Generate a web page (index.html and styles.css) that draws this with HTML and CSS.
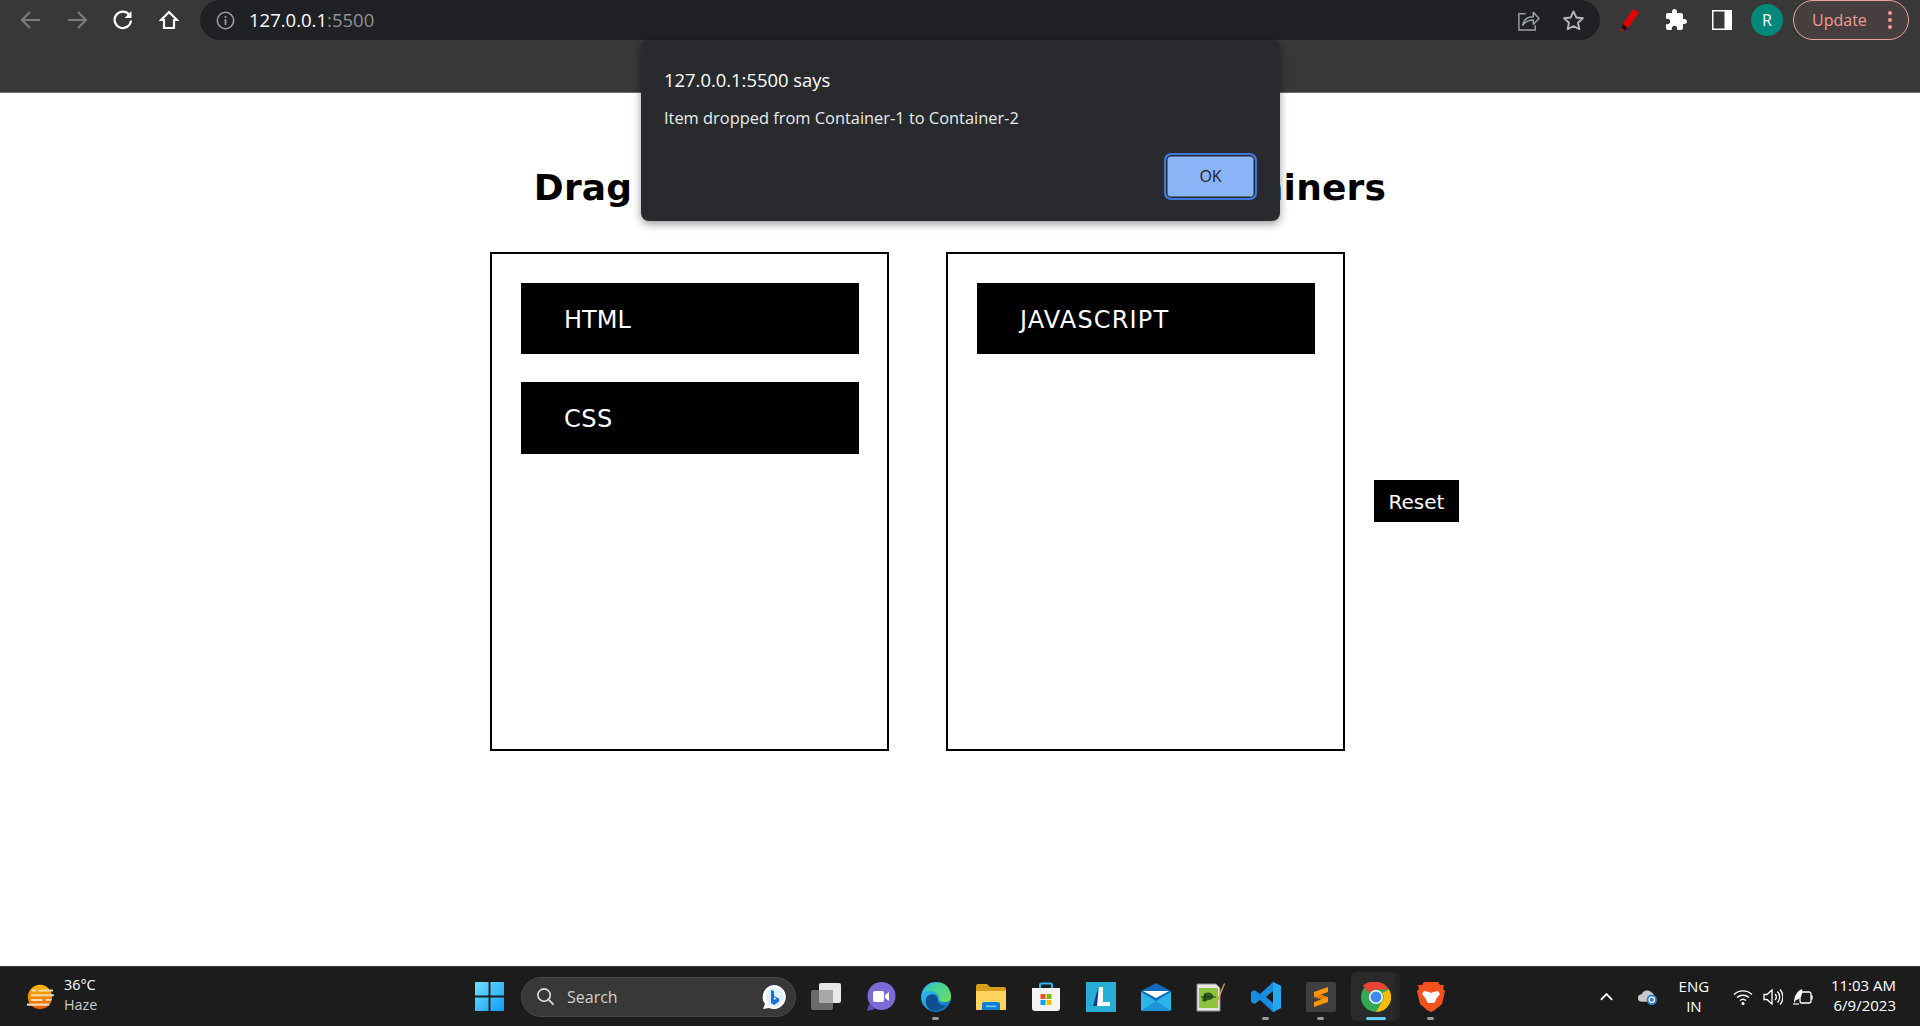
FILE: index.html
```html
<!DOCTYPE html>
<html lang="en">
<head>
    <meta charset="UTF-8">
    <title>Drag and Drop</title>
    <link rel="stylesheet" href="styles.css">
</head>
<body>
    <!-- browser toolbar -->
    <header class="browser">
        <div class="toolbar">
            <div class="nav-btns">
                <svg class="nav-icon" viewBox="0 0 20 20"><path class="stroke-off" d="M19 10H1M9 2l-8 8 8 8"/></svg>
                <svg class="nav-icon" viewBox="0 0 20 20"><path class="stroke-off" d="M1 10h18M11 2l8 8-8 8"/></svg>
                <svg class="nav-icon" viewBox="0 0 20 20"><path class="stroke-on" d="M16.5 5A8.2 8.2 0 1 0 18 10.5"/><path class="fill-on" d="M18.5 1v7h-7z"/></svg>
                <svg class="nav-icon" viewBox="0 0 20 20"><path class="stroke-on" d="M10 2l8 8h-3v8H5v-8H2z"/></svg>
            </div>
            <div class="omnibox">
                <svg class="info-icon" viewBox="0 0 20 20"><circle cx="10" cy="10" r="8.6" fill="none" stroke="#9aa0a6" stroke-width="1.6"/><rect x="9.1" y="8.6" width="1.8" height="6" fill="#9aa0a6"/><rect x="9.1" y="5.4" width="1.8" height="1.9" fill="#9aa0a6"/></svg>
                <span class="url">127.0.0.1<span class="url-port">:5500</span></span>
                <div class="omni-actions">
                    <svg class="omni-icon" viewBox="0 0 24 24"><path d="M9 5H2v17h17v-5" fill="none" stroke="#9aa0a6" stroke-width="1.5"/><path d="M6 17c1-6 5-9 11-9V3.500l6 6.500-6 6v-4.500c-5 0-8 1.500-11 5.500z" fill="none" stroke="#9aa0a6" stroke-width="1.5" stroke-linejoin="round"/></svg>
                    <svg class="omni-icon" viewBox="0 0 24 24"><path d="M12 2.500l2.900 6.300 6.900.8-5.100 4.700 1.400 6.800-6.100-3.400-6.100 3.400 1.400-6.800-5.100-4.700 6.900-.8z" fill="none" stroke="#b4b7ba" stroke-width="2" stroke-linejoin="round"/></svg>
                </div>
            </div>
            <div class="extensions">
                <svg class="ext-icon" viewBox="0 0 24 24"><path d="M15.300 1L21 4.700 9.700 20.300 4.700 16z" fill="#e60000"/><path d="M4.700 16l5 4.300-2.700 1.700-3.500-2z" fill="#111"/><path d="M3.500 20l2 1.500-1 1.500H2z" fill="#e60000"/></svg>
                <svg class="ext-icon" viewBox="0 0 24 24"><path fill="#fff" d="M20.500 11H19V7c0-1.100-.9-2-2-2h-4V3.500C13 2.120 11.880 1 10.500 1S8 2.120 8 3.500V5H4c-1.100 0-1.990.9-1.990 2v3.800H3.500c1.490 0 2.700 1.210 2.700 2.700s-1.210 2.700-2.700 2.700H2V20c0 1.100.9 2 2 2h3.800v-1.500c0-1.490 1.210-2.700 2.700-2.700 1.490 0 2.700 1.210 2.700 2.700V22H17c1.100 0 2-.9 2-2v-4h1.500c1.380 0 2.500-1.120 2.500-2.500S21.880 11 20.500 11z"/></svg>
                <svg class="ext-icon" viewBox="0 0 24 24"><rect x="2" y="2" width="20" height="20" fill="#fff"/><rect x="3.500" y="3.500" width="11" height="17" fill="#383838"/></svg>
            </div>
            <div class="avatar">R</div>
            <div class="update">
                <span>Update</span>
                <span class="dots"><i></i><i></i><i></i></span>
            </div>
        </div>
        <div class="toolbar-rest"></div>
    </header>

    <main class="page">
        <h1 class="title">Drag and Drop Items Between Containers</h1>
        <div class="board">
            <section class="container">
                <div class="item">HTML</div>
                <div class="item item-tall">CSS</div>
            </section>
            <section class="container">
                <div class="item item-wide">JAVASCRIPT</div>
            </section>
            <button class="reset">Reset</button>
        </div>
    </main>

    <!-- alert dialog -->
    <div class="dialog">
        <p class="dialog-title">127.0.0.1:5500 says</p>
        <p class="dialog-msg">Item dropped from Container-1 to Container-2</p>
        <div class="dialog-actions"><button class="dialog-ok">OK</button></div>
    </div>

    <footer class="taskbar">
        <div class="weather">
            <svg class="weather-icon" viewBox="0 0 32 32">
                <defs><linearGradient id="sun" x1="0" y1="0" x2="0" y2="1"><stop offset="0" stop-color="#ffb900"/><stop offset="1" stop-color="#e85d04"/></linearGradient></defs>
                <circle cx="16" cy="16" r="13" fill="url(#sun)"/>
                <g fill="#f2dcb0"><rect x="14" y="8" width="16" height="2.200" rx="1"/><rect x="7" y="8" width="5" height="2.200" rx="1"/><rect x="6" y="13" width="25" height="2.200" rx="1"/><rect x="6" y="18" width="13" height="2.200" rx="1"/><rect x="22" y="18" width="6" height="2.200" rx="1"/><rect x="2" y="23" width="24" height="2.200" rx="1"/></g>
            </svg>
            <div class="weather-text">
                <span class="temp">36°C</span>
                <span class="haze">Haze</span>
            </div>
        </div>

        <div class="tasks">
            <svg class="win-logo" viewBox="0 0 30 30">
                <defs><linearGradient id="win" x1="0" y1="0" x2="1" y2="1"><stop offset="0" stop-color="#6fe0ff"/><stop offset="1" stop-color="#0f9cf5"/></linearGradient></defs>
                <path fill="url(#win)" d="M0 1a1 1 0 0 1 1-1h13v14H0zM16 0h13a1 1 0 0 1 1 1v13H16zM0 16h14v14H1a1 1 0 0 1-1-1zM16 16h14v13a1 1 0 0 1-1 1H16z"/>
            </svg>
            <div class="search">
                <svg class="search-icon" viewBox="0 0 20 20"><circle cx="8.500" cy="8.500" r="6.500" fill="none" stroke="#ddd" stroke-width="1.700"/><path d="M13.500 13.500L18.500 18.500" stroke="#ddd" stroke-width="1.900"/></svg>
                <span class="search-text">Search</span>
                <svg class="bing-icon" viewBox="0 0 26 26"><path d="M13 1a12 12 0 1 1-5 23l-6 1 2-5A12 12 0 0 1 13 1z" fill="#fff"/><path d="M13 3.500a9.500 9.500 0 1 1-4 18l-3 .5 1-3A9.500 9.500 0 0 1 13 3.500z" fill="#dff1ff"/><path d="M10 6l3 1v5l5 2.500v3L13 21l-3-2z" fill="#1a6fe0"/><path d="M13 16l2.500-1.500L13 13z" fill="#dff1ff"/></svg>
            </div>

            <div class="task">
                <svg class="task-icon" viewBox="0 0 30 30"><rect x="8" y="1" width="22" height="20" rx="2" fill="#e8e8e8"/><rect x="0" y="8" width="22" height="20" rx="2" fill="#6a6a6a"/><rect x="8" y="8" width="14" height="13" fill="#a8a8a8"/></svg>
            </div>
            <div class="task">
                <svg class="task-icon" viewBox="0 0 30 30"><circle cx="15.500" cy="14" r="14" fill="#7b6bd6"/><path d="M3 22l-2 7 8-2z" fill="#5b4fb8"/><rect x="7" y="9" width="11" height="11" rx="2" fill="#fff"/><path d="M19 13l4-3v9l-4-3z" fill="#fff"/></svg>
            </div>
            <div class="task task-open">
                <svg class="task-icon" viewBox="0 0 30 30">
                    <defs><linearGradient id="edge" x1="0" y1="0" x2="1" y2="1"><stop offset="0" stop-color="#35c1f1"/><stop offset=".6" stop-color="#1b9de2"/><stop offset="1" stop-color="#0c59a4"/></linearGradient><linearGradient id="edge2" x1="0" y1="0" x2="1" y2="1"><stop offset="0" stop-color="#2fc7c0"/><stop offset="1" stop-color="#6fe05a"/></linearGradient></defs>
                    <circle cx="15" cy="15" r="15" fill="url(#edge)"/>
                    <path d="M3 10C6 2 14-1 21 1c6 2 9 8 9 14 0 3-2 5-6 5-4 0-6-1-6-4 0-5-7-9-15-6z" fill="url(#edge2)"/>
                    <path d="M9 28c-5-4-6-12-1-15 5-2 9 1 9 5 0 4 4 6 8 5-4 5-10 7-16 5z" fill="#0f4f90"/>
                </svg>
            </div>
            <div class="task">
                <svg class="task-icon" viewBox="0 0 30 30"><path d="M0 4a2 2 0 0 1 2-2h9l3 3h14a2 2 0 0 1 2 2v20a1 1 0 0 1-1 1H1a1 1 0 0 1-1-1z" fill="#d79e1a"/><path d="M0 9h30v18a1 1 0 0 1-1 1H1a1 1 0 0 1-1-1z" fill="#ffd45e"/><path d="M6 22a2 2 0 0 1 2-2h14a2 2 0 0 1 2 2v6H6z" fill="#0f80d7"/><rect x="10" y="23.500" width="10" height="1.600" fill="#7cc7f5"/></svg>
            </div>
            <div class="task">
                <svg class="task-icon" viewBox="0 0 30 30"><path d="M1 6h28v20a3 3 0 0 1-3 3H4a3 3 0 0 1-3-3z" fill="#f4f4f4"/><path d="M9 6V3a1.500 1.500 0 0 1 1.500-1.500h9A1.500 1.500 0 0 1 21 3v3" fill="none" stroke="#29b6f6" stroke-width="2"/><rect x="9.500" y="12" width="5" height="5" fill="#f25022"/><rect x="15.500" y="12" width="5" height="5" fill="#7fba00"/><rect x="9.500" y="18" width="5" height="5" fill="#00a4ef"/><rect x="15.500" y="18" width="5" height="5" fill="#ffb900"/></svg>
            </div>
            <div class="task">
                <svg class="task-icon" viewBox="0 0 30 30"><rect width="30" height="30" fill="#26aed6"/><path d="M7 24L12 6v18z" fill="#123a8a"/><path d="M13 5h4v15h7v4H11z" fill="#fff"/></svg>
            </div>
            <div class="task">
                <svg class="task-icon" viewBox="0 0 30 30"><path d="M0 9L15 1l15 8v20L0 29z" fill="#0f6cbd"/><path d="M0 10v17a2 2 0 0 0 2 2h26a2 2 0 0 0 2-2V10L15 19z" fill="#2cb5ea"/><path d="M2 9h26L15 16z" fill="#fff"/><path d="M0 29l15-10 15 10z" fill="#0f78c8" opacity=".55"/></svg>
            </div>
            <div class="task">
                <svg class="task-icon" viewBox="0 0 30 30"><path d="M1 2h19l4 4v23H1z" fill="#e6e6e6" stroke="#8d8d8d"/><rect x="3" y="6" width="19" height="20" fill="#8cc63f"/><path d="M7 15c1-5 7-6 10-2 1 2-1 5-4 5-2 0-5 2-7 1z" fill="#2f5d1c"/><path d="M5 15h15M9 11v9" stroke="#1f3d10" stroke-width="1"/><path d="M28 1L20 21l-1 3 2-2L29 2z" fill="#d9a03a"/></svg>
            </div>
            <div class="task task-open">
                <svg class="task-icon" viewBox="0 0 30 30"><path d="M22 0l8 4v22l-8 4-13-12-5.500 4L0 20v-10l3.500-2L9 12zM22 9l-7 6 7 6z" fill="#1a8ce0"/><path d="M22 0l8 4v22l-8 4z" fill="#23a8f2"/></svg>
            </div>
            <div class="task task-open">
                <svg class="task-icon" viewBox="0 0 30 30"><rect width="30" height="30" rx="2" fill="#3f3f3f"/><path d="M8 10l14 5v5L8 15z" fill="#d98200"/><path d="M22 5v5L8 15v-5zM22 15v5L8 25v-5z" fill="#ff9800"/></svg>
            </div>
            <div class="task task-active">
                <div class="active-bg"></div>
                <svg class="task-icon" viewBox="0 0 30 30"><circle cx="15" cy="15" r="15" fill="#34a853"/><path d="M15 0a15 15 0 0 1 13 7.500H15a7.500 7.500 0 0 0-6.500 3.750L2 3.500A15 15 0 0 1 15 0z" fill="#ea4335"/><path d="M28 7.500A15 15 0 0 1 15 30l6.500-11.250A7.500 7.500 0 0 0 21.500 11z" fill="#fbbc04"/><circle cx="15" cy="15" r="7" fill="#fff"/><circle cx="15" cy="15" r="5.500" fill="#4285f4"/></svg>
            </div>
            <div class="task task-open">
                <svg class="task-icon" viewBox="0 0 30 30"><path d="M8 0h14l2 3h4l-1 4 2 2-3 13-7 6-4 2-4-2-7-6L1 9l2-2-1-4h4z" fill="#f4511e"/><path d="M8 9l5 1 2 1 2-1 5-1 2 3-4 5-1 3-4 3-4-3-1-3-4-5z" fill="#fff"/><path d="M12 21h6l-3 3z" fill="#f4511e"/></svg>
            </div>
        </div>

        <div class="tray">
            <svg class="chevron" viewBox="0 0 16 10"><path d="M2 8l6-6 6 6" fill="none" stroke="#fff" stroke-width="2"/></svg>
            <svg class="cloud" viewBox="0 0 22 18"><path d="M5 14a4 4 0 0 1 0-8 6 6 0 0 1 10-2 4 4 0 0 1 2 6v4z" fill="#c8c8c8"/><circle cx="15.500" cy="12" r="5.500" fill="#2d7fd3"/><circle cx="15.500" cy="12" r="2.800" fill="none" stroke="#fff" stroke-width="1.300"/></svg>
            <div class="lang"><span>ENG</span><span>IN</span></div>
            <svg class="tray-icon" viewBox="0 0 20 20"><g fill="none" stroke="#fff" stroke-width="1.400"><path d="M1 7.500a13 13 0 0 1 18 0"/><path d="M4 10.500a9 9 0 0 1 12 0"/><path d="M7 13.500a4.500 4.500 0 0 1 6 0"/></g><circle cx="10" cy="16.500" r="1.500" fill="#fff"/></svg>
            <svg class="tray-icon" viewBox="0 0 20 20"><g fill="none" stroke="#fff" stroke-width="1.300"><path d="M1 7.500h3l5-4.500v14l-5-4.500H1z"/><path d="M12 7a4 4 0 0 1 0 6"/><path d="M14.500 4.500a8 8 0 0 1 0 11"/><path d="M17 2.500a11 11 0 0 1 0 15"/></g></svg>
            <svg class="tray-icon" viewBox="0 0 20 20"><rect x="7" y="5" width="11" height="11" rx="2" fill="none" stroke="#fff" stroke-width="1.300"/><rect x="18" y="8.500" width="1.600" height="4" fill="#fff"/><path d="M1 16C1 9 4 4 9 2c1 5-1 10-6 11z" fill="#fff"/><path d="M0 17h6" stroke="#fff" stroke-width="1.200"/></svg>
            <div class="clock"><span>11:03 AM</span><span>6/9/2023</span></div>
        </div>
    </footer>
</body>
</html>
```

FILE: styles.css
```css
/* page frame */
html, body {
    margin: 0;
    padding: 0;
    height: 100%;
}

body {
    display: flex;
    flex-direction: column;
    background: #fff;
    overflow: hidden;
    font-family: "Open Sans", "Noto Sans", sans-serif;
}

/* browser toolbar */
.browser {
    height: 93px;
    flex: none;
    background: #383838;
    border-bottom: 1px solid #6a6a6a;
    box-sizing: border-box;
}

.toolbar {
    height: 40px;
    display: flex;
    align-items: center;
}

.nav-btns {
    width: 200px;
    flex: none;
    display: flex;
    gap: 26px;
    padding-left: 21px;
    box-sizing: border-box;
}

.nav-icon {
    width: 20px;
    height: 20px;
}

.stroke-off {
    fill: none;
    stroke: #7c7c7c;
    stroke-width: 2;
}

.stroke-on {
    fill: none;
    stroke: #fff;
    stroke-width: 2.200;
}

.fill-on {
    fill: #fff;
}

.omnibox {
    width: 1400px;
    height: 40px;
    flex: none;
    display: flex;
    align-items: center;
    background: #202124;
    border-radius: 20px;
    box-sizing: border-box;
    padding-left: 16px;
}

.info-icon {
    width: 19px;
    height: 19px;
}

.url {
    margin-left: 14px;
    margin-top: -2px;
    font-size: 18.500px;
    color: #fff;
}

.url-port {
    color: #8f9296;
}

.omni-actions {
    margin-left: auto;
    display: flex;
    gap: 22px;
    padding-right: 15px;
}

.omni-icon {
    width: 23px;
    height: 23px;
}

.extensions {
    flex: none;
    display: flex;
    gap: 22px;
    padding-left: 18px;
}

.ext-icon {
    width: 24px;
    height: 24px;
}

.avatar {
    width: 32px;
    height: 32px;
    flex: none;
    margin-left: 17px;
    border-radius: 50%;
    background: #00897b;
    color: #fff;
    font-size: 16px;
    display: flex;
    align-items: center;
    justify-content: center;
}

.update {
    width: 116px;
    height: 40px;
    flex: none;
    margin-left: 10px;
    box-sizing: border-box;
    border: 1.500px solid #eaa79f;
    border-radius: 20px;
    background: #473f3f;
    color: #f09c93;
    font-size: 16px;
    display: flex;
    align-items: center;
    padding-left: 18px;
}

.dots {
    margin-left: auto;
    margin-right: 16px;
    display: flex;
    flex-direction: column;
    gap: 3px;
}

.dots i {
    display: block;
    width: 4px;
    height: 4px;
    border-radius: 50%;
    background: #f09c93;
}

/* page content */
.page {
    flex: 1;
    min-height: 0;
}

.title {
    margin: 0;
    padding-top: 73px;
    height: 86px;
    font-family: "DejaVu Sans", Verdana, sans-serif;
    font-size: 36px;
    line-height: 44px;
    font-weight: bold;
    letter-spacing: 0.200px;
    text-align: center;
    color: #000;
}

.board {
    display: flex;
    align-items: center;
    padding-left: 490px;
}

.container {
    width: 399px;
    height: 499px;
    box-sizing: border-box;
    border: 2px solid #000;
    padding: 29px 28px 29px 29px;
    margin-right: 57px;
    display: flex;
    flex-direction: column;
    gap: 28px;
}

.container + .container {
    margin-right: 29px;
}

.item {
    height: 71px;
    flex: none;
    background: #000;
    color: #fff;
    font-family: "DejaVu Sans", Verdana, sans-serif;
    font-size: 24px;
    line-height: 75px;
    padding-left: 43px;
}

.item-tall {
    height: 72px;
    letter-spacing: 0.500px;
}

.item-wide {
    letter-spacing: 1.150px;
}

.reset {
    width: 85px;
    height: 42px;
    margin-bottom: 2px;
    padding: 2px 0 0;
    border: none;
    background: #000;
    color: #fff;
    font-family: "DejaVu Sans", Verdana, sans-serif;
    font-size: 20px;
}

/* alert dialog */
.dialog {
    position: absolute;
    left: 641px;
    top: 40px;
    width: 639px;
    height: 181px;
    box-sizing: border-box;
    padding: 28px 23px 21px 23px;
    background: #292a2d;
    border-radius: 8px;
    box-shadow: 0 3px 8px rgba(0, 0, 0, 0.4);
    display: flex;
    flex-direction: column;
    color: #e8eaed;
}

.dialog-title {
    margin: 0;
    font-size: 18.400px;
    line-height: 24px;
    color: #fff;
}

.dialog-msg {
    margin: 15px 0 0;
    font-size: 16.400px;
    line-height: 22px;
}

.dialog-actions {
    margin-top: auto;
    display: flex;
    justify-content: flex-end;
}

.dialog-ok {
    width: 93px;
    height: 47px;
    box-sizing: border-box;
    background: #8ab4f8;
    border: 2px solid #3b78e7;
    box-shadow: inset 0 0 0 1.500px #292a2d;
    border-radius: 7px;
    color: #202124;
    font-family: inherit;
    font-size: 16px;
    padding: 0 0 2px;
}

/* taskbar */
.taskbar {
    height: 60px;
    flex: none;
    box-sizing: border-box;
    border-top: 1px solid #3a3a3a;
    background: #1c1c1c;
    display: flex;
    align-items: center;
    color: #fff;
}

.weather {
    width: 475px;
    flex: none;
    box-sizing: border-box;
    padding-left: 25px;
    display: flex;
    align-items: center;
    gap: 9px;
}

.weather-icon {
    width: 30px;
    height: 30px;
}

.weather-text {
    display: flex;
    flex-direction: column;
    font-size: 14.400px;
    line-height: 20px;
    margin-top: -3px;
}

.haze {
    color: #c8c8c8;
}

.tasks {
    display: flex;
    align-items: center;
}

.win-logo {
    width: 29px;
    height: 29px;
    flex: none;
    margin-right: 17px;
}

.search {
    width: 275px;
    height: 40px;
    flex: none;
    box-sizing: border-box;
    border: 1px solid #484848;
    border-radius: 20px;
    background: #383838;
    display: flex;
    align-items: center;
    padding-left: 14px;
    margin-right: 2px;
}

.search-icon {
    width: 19px;
    height: 19px;
}

.search-text {
    margin-left: 12px;
    font-size: 16px;
    color: #d0d0d0;
}

.bing-icon {
    width: 26px;
    height: 26px;
    margin-left: auto;
    margin-right: 8px;
}

.task {
    width: 55px;
    height: 59px;
    flex: none;
    position: relative;
    display: flex;
    align-items: center;
    justify-content: center;
}

.task-icon {
    width: 30px;
    height: 30px;
    position: relative;
}

.task-open::after,
.task-active::after {
    content: "";
    position: absolute;
    left: 50%;
    bottom: 6px;
    width: 7px;
    height: 3px;
    margin-left: -3.500px;
    border-radius: 2px;
    background: #9a9a9a;
}

.task-active::after {
    width: 20px;
    margin-left: -10px;
    background: #60cdff;
}

.active-bg {
    position: absolute;
    left: 3px;
    top: 5px;
    width: 44px;
    height: 49px;
    border-radius: 5px;
    background: #2a2a2a;
    box-shadow: 5px 0 0 #252525;
}

.tray {
    margin-left: auto;
    display: flex;
    align-items: center;
    padding-right: 24px;
}

.chevron {
    width: 15px;
    height: 10px;
    margin-right: 22.500px;
}

.cloud {
    width: 21px;
    height: 18px;
    margin-right: 16px;
}

.lang {
    width: 40px;
    margin-right: 19px;
    display: flex;
    flex-direction: column;
    align-items: center;
    font-size: 15px;
    line-height: 20px;
    margin-top: -1px;
}

.tray-icon {
    width: 20px;
    height: 20px;
    margin-right: 10px;
}

.clock {
    margin-left: 8px;
    display: flex;
    flex-direction: column;
    align-items: flex-end;
    font-size: 15px;
    line-height: 20px;
    margin-top: -3px;
}
```
